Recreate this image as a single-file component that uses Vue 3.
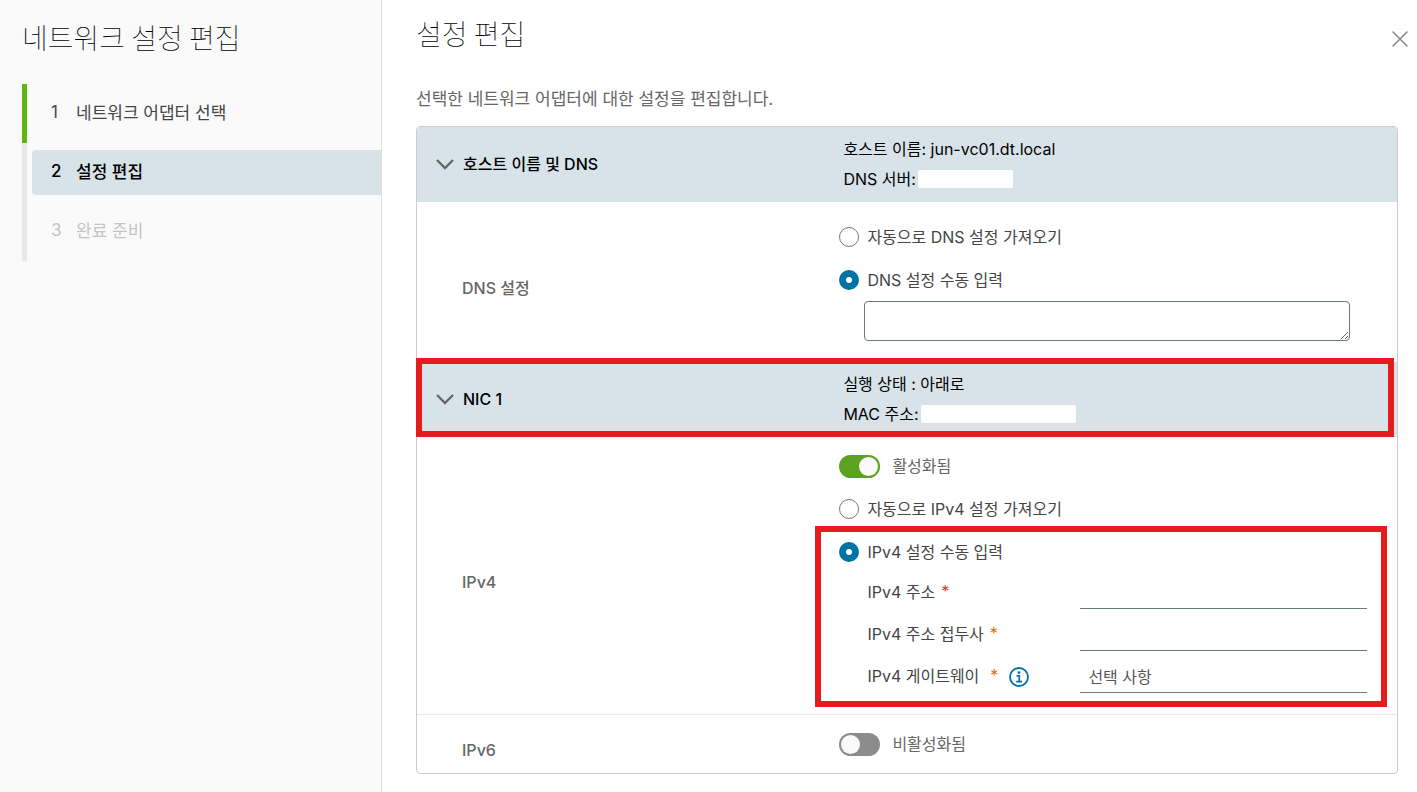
<script setup>
import { ref, reactive } from 'vue'

const steps = [
  { num: 1, name: '네트워크 어댑터 선택', state: 'done' },
  { num: 2, name: '설정 편집', state: 'active' },
  { num: 3, name: '완료 준비', state: 'disabled' },
]

const hostOpen = ref(true)
const nicOpen = ref(true)

const dnsMode = ref('manual')
const dnsServers = ref('')

const ipv4Enabled = ref(true)
const ipv4Mode = ref('manual')
const ipv6Enabled = ref(false)

const ipv4 = reactive({ address: '', prefix: '', gateway: '' })
</script>

<template>
<div class="wizard">
  <aside class="sidebar">
    <h1>네트워크 설정 편집</h1>
    <ol class="steps">
      <li v-for="s in steps" :key="s.num" :class="['step', s.state]">
        <button type="button" class="step-btn" :disabled="s.state === 'disabled'">
          <span class="step-num">{{ s.num }}</span>
          <span>{{ s.name }}</span>
        </button>
      </li>
    </ol>
  </aside>

  <main class="content">
    <header class="top">
      <h2>설정 편집</h2>
      <button type="button" class="close" aria-label="닫기">
        <svg width="16" height="16" viewBox="0 0 16 16" fill="none" stroke="#8c8c8c" stroke-width="1.6" stroke-linecap="round">
          <path d="M1 1l14 14M15 1L1 15" />
        </svg>
      </button>
    </header>
    <p class="desc">선택한 네트워크 어댑터에 대한 설정을 편집합니다.</p>

    <div class="panel">
      <!-- Имя хоста и DNS -->
      <div class="row head">
        <button type="button" class="head-title" :aria-expanded="hostOpen" @click="hostOpen = !hostOpen">
          <svg width="18" height="12" viewBox="0 0 18 12" fill="none" stroke="#666" stroke-width="2.4">
            <path d="M1 2l8 8 8-8" />
          </svg>
          호스트 이름 및 DNS
        </button>
        <div class="head-info">
          <div>호스트 이름: jun-vc01.dt.local</div>
          <div class="masked">DNS 서버:<span class="mask dns"></span></div>
        </div>
      </div>

      <div v-show="hostOpen" class="row dns-row">
        <div class="row-label">DNS 설정</div>
        <div class="row-value">
          <label class="option">
            <input v-model="dnsMode" type="radio" name="dns" value="auto" />
            <span>자동으로 DNS 설정 가져오기</span>
          </label>
          <div>
            <label class="option">
              <input v-model="dnsMode" type="radio" name="dns" value="manual" />
              <span>DNS 설정 수동 입력</span>
            </label>
            <textarea v-model="dnsServers" aria-label="DNS 서버"></textarea>
          </div>
        </div>
      </div>

      <!-- NIC 1 -->
      <div class="row head marked">
        <button type="button" class="head-title" :aria-expanded="nicOpen" @click="nicOpen = !nicOpen">
          <svg width="18" height="12" viewBox="0 0 18 12" fill="none" stroke="#666" stroke-width="2.4">
            <path d="M1 2l8 8 8-8" />
          </svg>
          NIC 1
        </button>
        <div class="head-info">
          <div>실행 상태 : 아래로</div>
          <div class="masked">MAC 주소:<span class="mask mac"></span></div>
        </div>
      </div>

      <div v-show="nicOpen" class="row ipv4-row">
        <div class="row-label">IPv4</div>
        <div class="row-value">
          <label class="option switch">
            <input v-model="ipv4Enabled" type="checkbox" />
            <span>활성화됨</span>
          </label>
          <label class="option">
            <input v-model="ipv4Mode" type="radio" name="ipv4" value="auto" />
            <span>자동으로 IPv4 설정 가져오기</span>
          </label>
          <div class="manual">
            <label class="option">
              <input v-model="ipv4Mode" type="radio" name="ipv4" value="manual" />
              <span>IPv4 설정 수동 입력</span>
            </label>
            <div class="field">
              <div class="field-label">
                <label for="addr">IPv4 주소</label>
                <span class="star red">*</span>
              </div>
              <input id="addr" v-model="ipv4.address" type="text" />
            </div>
            <div class="field">
              <div class="field-label">
                <label for="prefix">IPv4 주소 접두사</label>
                <span class="star">*</span>
              </div>
              <input id="prefix" v-model="ipv4.prefix" type="text" />
            </div>
            <div class="field">
              <div class="field-label gateway">
                <label for="gateway">IPv4 게이트웨이</label>
                <span class="star">*</span>
                <svg class="info" width="20" height="20" viewBox="0 0 20 20" fill="none" stroke="#0072a3">
                  <circle cx="10" cy="10" r="9" stroke-width="1.8" />
                  <circle cx="10" cy="5.6" r="1.4" fill="#0072a3" stroke="none" />
                  <path d="M7.6 8.9h2.7v5.6M7.2 14.6h5.8" stroke-width="1.7" />
                </svg>
              </div>
              <input id="gateway" v-model="ipv4.gateway" type="text" placeholder="선택 사항" />
            </div>
          </div>
        </div>
      </div>

      <div v-show="nicOpen" class="row ipv6-row">
        <div class="row-label">IPv6</div>
        <div class="row-value">
          <label class="option switch">
            <input v-model="ipv6Enabled" type="checkbox" />
            <span>비활성화됨</span>
          </label>
        </div>
      </div>
    </div>
  </main>
</div>
</template>

<style>
body {
  margin: 0;
  background: #fff;
}
</style>

<style scoped>
.wizard {
  display: flex;
  min-height: 100vh;
  font-family: Inter, "Noto Sans CJK KR", sans-serif;
  font-size: 16px;
  color: #454545;
}

.wizard *,
.wizard *::after {
  box-sizing: border-box;
}

button,
input,
textarea {
  font: inherit;
  color: inherit;
}

button {
  border: 0;
  background: none;
  padding: 0;
  text-align: left;
  cursor: pointer;
}

/* Боковая панель с шагами */
.sidebar {
  flex: 0 0 382px;
  background: #fafafa;
  border-right: 1px solid #ddd;
  padding: 17px 0 0 22px;
}

h1,
h2 {
  margin: 0;
  font-family: "Noto Sans CJK KR", sans-serif;
  font-size: 28px;
  line-height: 40px;
  font-weight: 100;
  color: #000;
}

.steps {
  list-style: none;
  margin: 27px 0 0;
  padding: 0;
}

.step {
  border-left: 5px solid #e8e8e8;
  padding: 7px 0 7px 5px;
}

.step.done {
  border-color: #60b515;
}

.step-btn {
  display: flex;
  align-items: center;
  gap: 14px;
  width: 100%;
  height: 45px;
  padding: 0 0 4px 19px;
  border-radius: 4px 0 0 4px;
  font-size: 17px;
}

.step-num {
  width: 11px;
}

.step.active .step-btn {
  background: #d8e3e9;
  color: #000;
  font-weight: 500;
}

.step.disabled .step-btn {
  color: #c4c4c4;
}

/* Основная часть */
.content {
  flex: 1;
  min-width: 0;
  padding: 13px 19px 18px 34px;
}

.top {
  display: flex;
  justify-content: space-between;
}

.close {
  display: flex;
  align-items: center;
  margin: 12px -10px 0 0;
}

.desc {
  margin: 31px 0 12px;
  font-size: 17px;
  line-height: 30px;
  color: #666;
}

.panel {
  border: 1px solid #ccc;
  border-radius: 4px;
}

.row {
  display: flex;
  align-items: center;
}

.head {
  position: relative;
  background: #d8e3e9;
  color: #000;
  padding: 7px 0 8px;
  line-height: 30px;
}

.head-title {
  flex: 0 0 43.1%;
  display: flex;
  align-items: center;
  gap: 9px;
  padding-left: 19px;
  font-weight: 500;
}

.head-info {
  padding-left: 4px;
}

/* Красная рамка вокруг строки */
.marked::after {
  content: '';
  position: absolute;
  inset: -4px 3px 0 -1px;
  border: 6px solid #e71b1b;
  pointer-events: none;
}

.masked {
  display: flex;
  align-items: center;
  gap: 2px;
}

.mask {
  height: 18px;
  background: #fff;
  border-radius: 2px;
}

.mask.dns {
  width: 95px;
}

.mask.mac {
  width: 155px;
}

.row-label {
  flex: 0 0 43.1%;
  padding: 12px 0 0 45px;
  line-height: 18px;
  font-weight: 500;
  color: #666;
}

.row-value {
  flex: 1;
  min-width: 0;
  display: flex;
  flex-direction: column;
  gap: 13px;
  padding-right: 30px;
}

.dns-row {
  padding: 20px 0 21px;
}

.ipv4-row {
  padding: 14px 0 21px;
  border-bottom: 1px solid #e8e8e8;
}

.ipv4-row .row-label {
  padding-top: 20px;
}

.ipv6-row {
  padding: 14px 0;
}

.option {
  display: flex;
  align-items: center;
  gap: 8px;
  height: 30px;
}

.option span {
  padding-bottom: 3px;
}

.option.switch {
  gap: 12px;
  color: #666;
}

input[type='radio'] {
  appearance: none;
  width: 20px;
  height: 20px;
  margin: 0;
  border: 1px solid #6a7a81;
  border-radius: 50%;
  background: #fff;
}

input[type='radio']:checked {
  border: 7px solid #0072a3;
}

input[type='checkbox'] {
  appearance: none;
  display: flex;
  width: 41px;
  height: 23px;
  margin: 0;
  padding: 2px;
  border-radius: 12px;
  background: #8c8c8c;
}

input[type='checkbox']::before {
  content: '';
  width: 19px;
  height: 19px;
  border-radius: 50%;
  background: #fafafa;
}

input[type='checkbox']:checked {
  justify-content: flex-end;
  background: #5aa220;
}

textarea {
  display: block;
  width: calc(100% - 42px);
  height: 40px;
  margin: 6px 0 0 25px;
  border: 1px solid #6a7a81;
  border-radius: 4px;
  background: #fff;
}

.manual {
  position: relative;
}

.manual::after {
  content: '';
  position: absolute;
  inset: -11px -20px -14px -24px;
  border: 6px solid #e71b1b;
  pointer-events: none;
}

.field {
  display: flex;
  height: 42px;
  padding-left: 28px;
}

.field-label {
  flex: 0 0 213px;
  display: flex;
  align-items: center;
  gap: 6px;
  padding-top: 6px;
}

.field-label.gateway {
  gap: 11px;
}

.info {
  margin-top: 4px;
}

.star {
  color: #d9720b;
}

.star.red {
  color: #c9402a;
}

.field input {
  flex: 1;
  min-width: 0;
  padding: 10px 8px 0;
  border: 0;
  border-bottom: 1px solid #6a7a81;
  background: none;
}

.field input::placeholder {
  color: #565656;
  opacity: 1;
}
</style>
